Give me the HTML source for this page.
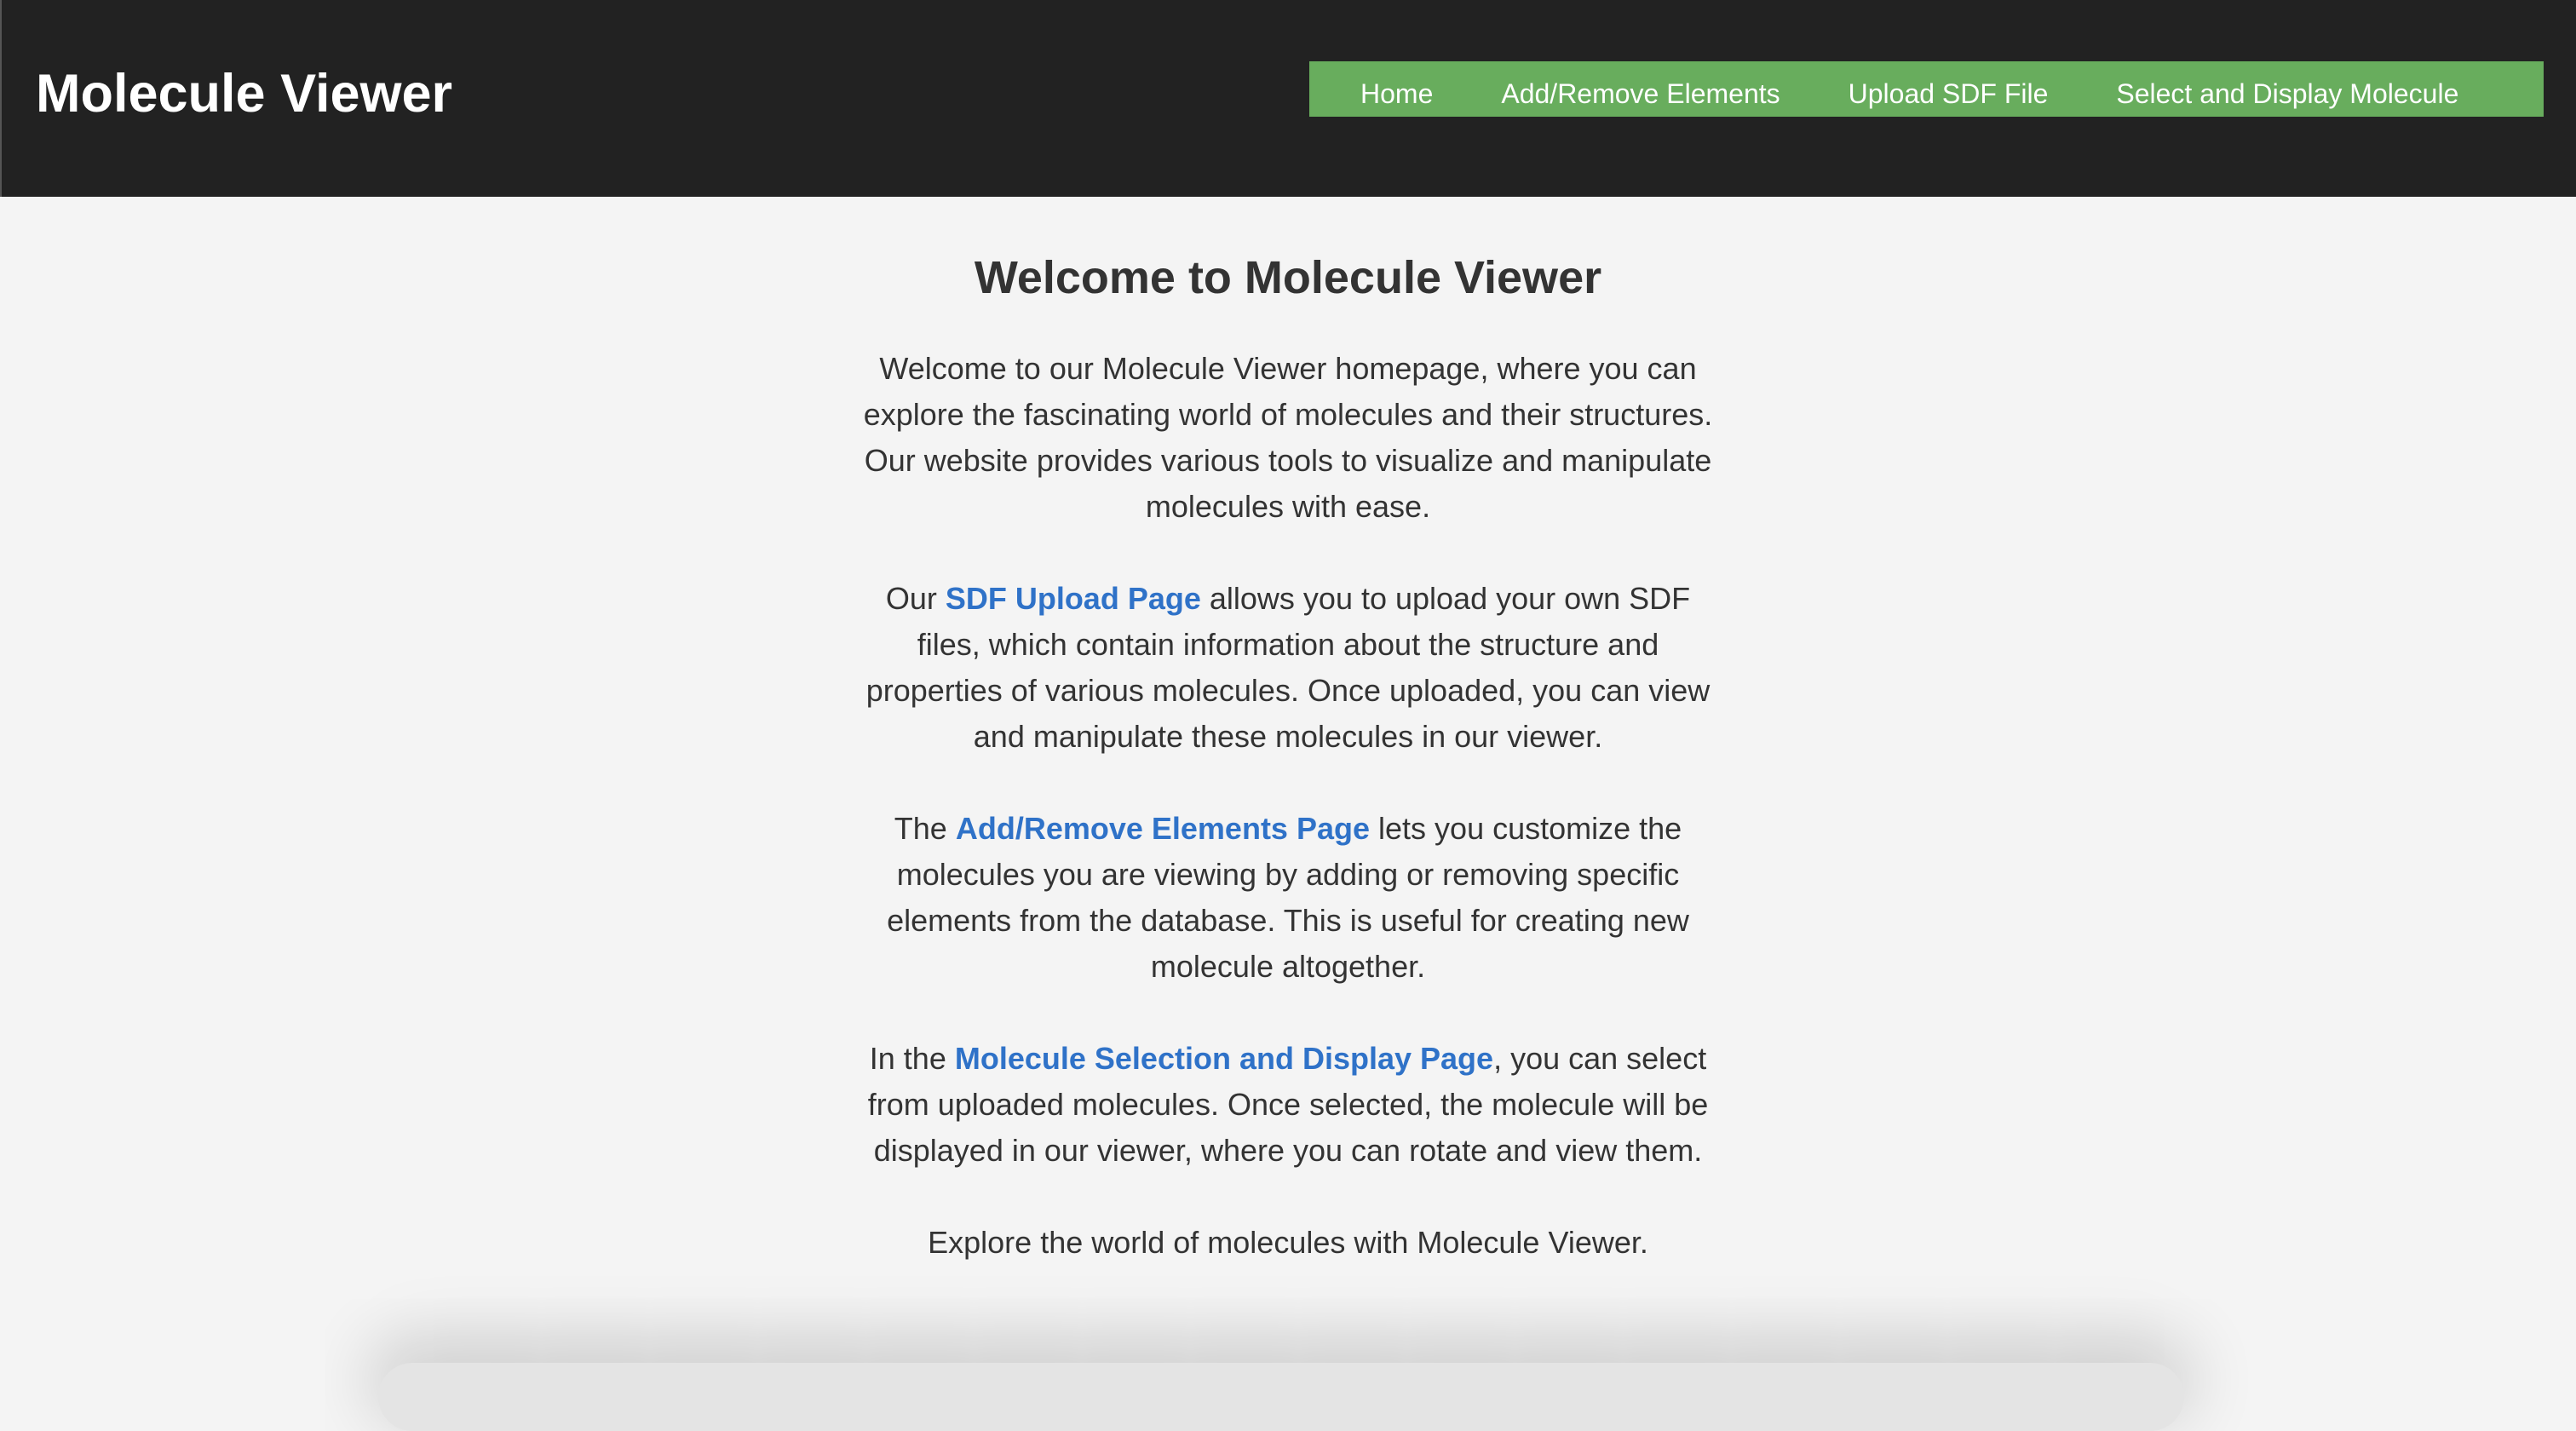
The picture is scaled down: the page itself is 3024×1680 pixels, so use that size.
<!DOCTYPE html>
<html><head><meta charset="utf-8"><style>
html,body{margin:0;padding:0;width:3024px;height:1591px;overflow:hidden;background:#f4f4f4;font-family:"Liberation Sans",Arial,sans-serif;}
header{position:absolute;left:0;top:0;width:3024px;height:231px;background:#222;box-sizing:border-box;border-left:2px solid #555;}
header h1{position:absolute;left:40px;top:72px;margin:0;color:#fff;font-size:63px;line-height:76px;font-weight:bold;}
nav{position:absolute;left:1535px;top:72px;width:1449px;height:65px;background:#68ad5d;display:flex;align-items:center;}
nav a{color:#fff;text-decoration:none;font-size:32px;margin-left:60px;margin-right:20px;white-space:nowrap;position:relative;top:6px;}
main{position:absolute;left:0;top:231px;width:3024px;text-align:center;color:#333;}
h2{margin:64px 0 0;font-size:54px;line-height:62px;font-weight:bold;}
p{margin:54px 0 0;font-size:36px;line-height:54px;white-space:nowrap;}
p.first{margin-top:49px}
a.l{color:#2f72c8;font-weight:bold;text-decoration:none;}
.sh{position:absolute;left:444px;top:1600px;width:2120px;height:80px;border-radius:60px;box-shadow:0 -20px 80px 10px rgba(0,0,0,0.16);background:#e4e4e4;}
</style></head><body>
<header><h1>Molecule Viewer</h1>
<nav><a>Home</a><a>Add/Remove Elements</a><a>Upload SDF File</a><a>Select and Display Molecule</a></nav></header>
<main>
<h2>Welcome to Molecule Viewer</h2>
<p class="first">Welcome to our Molecule Viewer homepage, where you can<br>explore the fascinating world of molecules and their structures.<br>Our website provides various tools to visualize and manipulate<br>molecules with ease.</p>
<p>Our <a class="l">SDF Upload Page</a> allows you to upload your own SDF<br>files, which contain information about the structure and<br>properties of various molecules. Once uploaded, you can view<br>and manipulate these molecules in our viewer.</p>
<p>The <a class="l">Add/Remove Elements Page</a> lets you customize the<br>molecules you are viewing by adding or removing specific<br>elements from the database. This is useful for creating new<br>molecule altogether.</p>
<p>In the <a class="l">Molecule Selection and Display Page</a>, you can select<br>from uploaded molecules. Once selected, the molecule will be<br>displayed in our viewer, where you can rotate and view them.</p>
<p>Explore the world of molecules with Molecule Viewer.</p>
</main>
<div class="sh"></div>
</body></html>
